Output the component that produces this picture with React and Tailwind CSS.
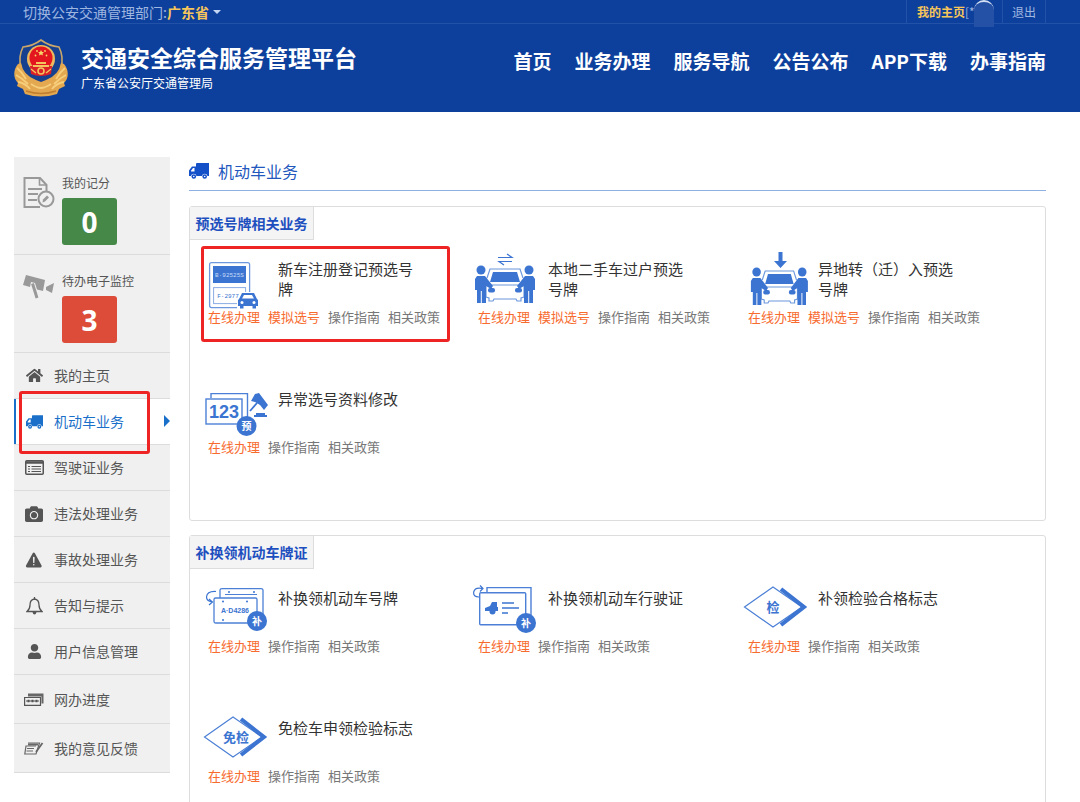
import React, { useState } from 'react';
import { FaHome, FaCamera, FaUser } from 'react-icons/fa';
import { IoWarning } from 'react-icons/io5';

const blue = '#3b74d1';
const cjk = '"Noto Sans CJK SC", sans-serif';

const navLinks = ['首页', '业务办理', '服务导航', '公告公布', 'APP下载', '办事指南'];

const Emblem = () => (
  <svg width="56" height="60" viewBox="0 0 56 60" aria-hidden="true">
    <path d="M28 2Q20 8 10 9Q5 19 8 30Q12 41 28 48Q44 41 48 30Q51 19 46 9Q36 8 28 2Z" fill="#17408f" stroke="#c9a66a" strokeWidth="1.600" />
    <path d="M5 26C0 32 0 40 5 45L4 48L10 51L12 56Q28 61 44 56L46 51L52 48L51 45C56 40 56 32 51 26L48 25Q46 37 33 42L28 44L23 42Q10 37 8 25Z" fill="#e3a850" />
    <path d="M4 30Q9 34 13 41M3 37Q9 40 15 46M5 44Q12 45 17 51M52 30Q47 34 43 41M53 37Q47 40 41 46M51 44Q44 45 39 51M18 46Q24 50 28 50Q32 50 38 46" fill="none" stroke="#f6ce7c" strokeWidth="1.800" />
    <path d="M13 53Q28 58 43 53" fill="none" stroke="#c07f30" strokeWidth="1.500" />
    <circle cx="28" cy="21" r="14" fill="#edb95e" />
    <circle cx="28" cy="20" r="11.500" fill="#e3151f" />
    <path d="M17 28H39L38 36Q28 40 18 36Z" fill="#dc2028" />
    <path d="M20 28H36M23 25H33" stroke="#f3c45d" strokeWidth="1.800" />
    <circle cx="28" cy="33" r="3" fill="none" stroke="#f3c45d" strokeWidth="1.600" />
    <path d="M18 31L23 35M38 31L33 35" stroke="#f3c45d" strokeWidth="1.400" />
    <path d="M28 12L29 14L31 14L29.500 15.500L30 17.500L28 16.500L26 17.500L26.500 15.500L25 14L27 14Z" fill="#f7d568" />
    <circle cx="22.500" cy="17.500" r="0.900" fill="#f7d568" />
    <circle cx="33.500" cy="17.500" r="0.900" fill="#f7d568" />
    <circle cx="24" cy="13" r="0.900" fill="#f7d568" />
    <circle cx="32" cy="13" r="0.900" fill="#f7d568" />
  </svg>
);

const ScoreIcon = () => (
  <svg width="32" height="34" viewBox="0 0 32 34" fill="none" stroke="#999" strokeWidth="2" aria-hidden="true">
    <path d="M23.500 16V9L17 2H1.500V31H17" />
    <path d="M16.500 2V9H24" strokeWidth="1.600" />
    <path d="M5 13H19M5 18H15M5 24H14" />
    <circle cx="23" cy="23" r="7.500" fill="#f0f0f0" />
    <path d="M19.500 26.500L20 23.500L24 19.500L26 21.500L22 25.500Z" fill="#999" stroke="none" />
  </svg>
);

const CctvIcon = () => (
  <svg width="32" height="26" viewBox="0 0 32 26" fill="#999" aria-hidden="true">
    <path d="M3 1L22 6L20 17L14 15.500L12 9L8 8L7 13L0 11Z" />
    <path d="M9.500 9.500L14 24" stroke="#999" strokeWidth="3" />
    <path d="M23 13L31 9L29 19L23 16Z" />
  </svg>
);

const ListIcon = () => (
  <svg width="19" height="15" viewBox="0 0 19 15" fill="none" stroke="#555" aria-hidden="true">
    <rect x="0.750" y="0.750" width="17.500" height="13.500" rx="1" strokeWidth="1.500" />
    <path d="M1 2.500H18" strokeWidth="2.500" />
    <path d="M3 6.500H5M6.500 6.500H16M3 9H5M6.500 9H16M3 11.500H5M6.500 11.500H16" strokeWidth="1.200" />
  </svg>
);

const BellIcon = () => (
  <svg width="17" height="18" viewBox="0 0 17 18" fill="none" stroke="#555" strokeWidth="1.300" aria-hidden="true">
    <path d="M8.500 2Q4 2.500 4 8Q4 12 1 14.500H16Q13 12 13 8Q13 2.500 8.500 2Z" />
    <path d="M8.500 0V2" />
    <path d="M6.500 15H10.500Q10 17.500 8.500 17.500T6.500 15Z" fill="#555" stroke="none" />
  </svg>
);

const ProgressIcon = () => (
  <svg width="20" height="13" viewBox="0 0 20 13" aria-hidden="true">
    <path d="M4 0.500H19.500V10.500H17.500V3.500H4Z" fill="#666" />
    <path d="M0.600 4.500H16.500V12.400H0.600Z" fill="#f0f0f0" stroke="#555" strokeWidth="1.200" />
    <path d="M2 8H15" stroke="#555" />
    <path d="M3.500 8H5.500M7.500 8H9.500M11.500 8H13.500" stroke="#555" strokeWidth="2.400" />
  </svg>
);

const FeedbackIcon = () => (
  <svg width="20" height="13" viewBox="0 0 20 13" fill="none" stroke="#666" strokeWidth="1.200" aria-hidden="true">
    <path d="M4 1H15.500L12 12H0.800L2 4H12" />
    <path d="M4 2.500H14" strokeWidth="2" />
    <path d="M3 6.500H10M2.500 9H9" />
    <path d="M18.500 1L12 10" strokeWidth="1.800" />
  </svg>
);

const TruckIcon = ({ className }) => (
  <svg width="20" height="16" viewBox="0 0 20 16" fill="currentColor" className={className} aria-hidden="true">
    <path d="M8 0H20V13H18.500A2.800 2.800 0 0 0 13 13H7.500A2.800 2.800 0 0 0 2 13H0V7.500L3 3.500H7V1Q7 0 8 0ZM4 5L2 7.800V8.500H5.500V5Z" fillRule="evenodd" />
    <circle cx="4.800" cy="13.500" r="2.300" />
    <circle cx="15.700" cy="13.500" r="2.300" />
    <circle cx="4.800" cy="13.500" r="0.800" fill="#fff" />
    <circle cx="15.700" cy="13.500" r="0.800" fill="#fff" />
  </svg>
);

const ServiceSvg = ({ children }) => (
  <svg width="66" height="60" viewBox="0 0 66 60" className="shrink-0" aria-hidden="true">
    {children}
  </svg>
);

const Badge = ({ x, y, text }) => (
  <>
    <circle cx={x} cy={y} r="10" fill={blue} />
    <text x={x} y={y + 4} fontSize="10" fontWeight="700" fill="#fff" textAnchor="middle" fontFamily={cjk}>{text}</text>
  </>
);

const NewPlateIcon = () => (
  <ServiceSvg>
    <rect x="6.600" y="11.600" width="40" height="45" rx="2" fill="#fff" stroke="#6d98de" strokeWidth="1.300" />
    <rect x="10" y="15" width="33" height="17" fill={blue} />
    <text x="26.500" y="26" fontSize="6" fill="#c9dbf7" textAnchor="middle" fontFamily="Liberation Mono">B·92525S</text>
    <rect x="10.600" y="36.600" width="32" height="16" fill="#fff" stroke="#8aace4" />
    <text x="25" y="47" fontSize="6" fill={blue} textAnchor="middle" fontFamily="Liberation Mono">F·2977</text>
    <path d="M34 58V49L38 41H52L56 49V58Z" fill="#fff" />
    <path d="M36 48L39 42H51L54 48L55 49V55H53V57.500H49.500V55H40.500V57.500H37V55H35V49Z" fill={blue} />
    <path d="M39 47.500L41 44H49L51 47.500Z" fill="#fff" />
    <circle cx="39" cy="51.500" r="1.500" fill="#fff" />
    <circle cx="51" cy="51.500" r="1.500" fill="#fff" />
  </ServiceSvg>
);

const Person = () => (
  <g fill={blue}>
    <circle cx="8" cy="19" r="4.500" />
    <path d="M4 25H12L20 35L18 38L13 35V52H8.800V40H7.800V52H4V39H2V28Z" />
    <rect x="15" y="37" width="7" height="4.500" rx="2" />
  </g>
);

// car held by two people, shared by the transfer and the relocation services
const CarPeople = () => (
  <>
    <path d="M14 27L17 18H47L50 27M18 34H46M13 27V46L16 47V50H20L21 48H43L44 50H48V47L51 46V27" fill="none" stroke="#6d98de" strokeWidth="1.200" />
    <path d="M20 21H44L47 31H17Z" fill={blue} />
    <Person />
    <g transform="translate(64 0) scale(-1 1)"><Person /></g>
  </>
);

const TransferIcon = () => (
  <ServiceSvg>
    <path d="M25 6.500H39L34 3M39 10.500H26L31 14" fill="none" stroke={blue} strokeWidth="1.200" />
    <CarPeople />
  </ServiceSvg>
);

const MoveInIcon = () => (
  <ServiceSvg>
    <path d="M35.500 1H39.500V10H44L37.500 17L31 10H35.500Z" fill={blue} />
    <g transform="translate(6 2) scale(0.95 1)"><CarPeople /></g>
  </ServiceSvg>
);

const FixNumberIcon = () => (
  <ServiceSvg>
    <path d="M8 17V12.600H44.500V42" fill="none" stroke="#4c80d6" strokeWidth="1.400" />
    <rect x="3" y="18" width="36" height="25" fill="#fff" stroke="#4c80d6" strokeWidth="1.400" />
    <text x="21" y="37" fontSize="18" fontWeight="700" fill={blue} textAnchor="middle" fontFamily="Liberation Sans">123</text>
    <path d="M52 13L56 12L65 24L61 29L57 24L52 21L48 20Z" fill={blue} />
    <path d="M54 22L47 30" stroke={blue} strokeWidth="1.800" />
    <path d="M51 35H64M53 33H62" stroke={blue} strokeWidth="2.200" />
    <Badge x={43.5} y={45} text="预" />
  </ServiceSvg>
);

const ReissuePlateIcon = () => (
  <ServiceSvg>
    <path d="M17 18V10Q17 8.600 19 8.600H58Q60 8.600 60 10V34" fill="none" stroke="#4c80d6" strokeWidth="1.300" />
    <path d="M22 14.500H54" stroke="#4c80d6" />
    <rect x="11" y="18" width="43" height="25" rx="1.500" fill="#fff" stroke="#4c80d6" strokeWidth="1.300" />
    <path d="M13 11.500Q4 11 3.500 17Q3.500 21 9 22M6 19L9.500 22L6 25" fill="none" stroke={blue} strokeWidth="1.200" />
    <g fill={blue}>
      <circle cx="26" cy="12" r="1" /><circle cx="51" cy="12" r="1" />
      <circle cx="20" cy="21.500" r="1" /><circle cx="44" cy="21.500" r="1" /><circle cx="20" cy="40" r="1" />
    </g>
    <text x="32" y="33" fontSize="7" fontWeight="700" fill={blue} textAnchor="middle" fontFamily="Liberation Sans">A·D4286</text>
    <Badge x={54} y={41} text="补" />
  </ServiceSvg>
);

const ReissueLicenseIcon = () => (
  <ServiceSvg>
    <path d="M14 13V7.600H58V35" fill="none" stroke="#4c80d6" strokeWidth="1.400" />
    <rect x="6.700" y="12.700" width="46" height="32" rx="1" fill="#fff" stroke="#4c80d6" strokeWidth="1.400" />
    <path d="M6 17Q0 17 0.700 12Q2 7 9 8.500M7 5.500L10 8.500L7 11.500" fill="none" stroke={blue} strokeWidth="1.200" />
    <path d="M12 28L17 26L19 22H24V27H25V31H12Z" fill={blue} />
    <circle cx="19.500" cy="31.500" r="3" fill={blue} />
    <path d="M29 23H41M29 28H46M29 33H35" stroke={blue} strokeWidth="1.700" />
    <Badge x={53} y={43} text="补" />
  </ServiceSvg>
);

const DiamondIcon = ({ text }) => (
  <ServiceSvg>
    <path d="M1.500 27L30 7L59 27L30 47Z" fill="#fff" stroke="#4c80d6" strokeWidth="1.200" />
    <path d="M38 9L61 27L38 45" fill="none" stroke={blue} strokeWidth="4" />
    <text x={text.length > 1 ? 33 : 30} y="32" fontSize="13" fontWeight="700" fill={blue} textAnchor="middle" fontFamily={cjk}>{text}</text>
  </ServiceSvg>
);

const menuItems = [
  { label: '我的主页', icon: <FaHome className="text-[17px]" /> },
  { label: '机动车业务', icon: <TruckIcon className="h-[14px] w-[17px]" />, framed: true },
  { label: '驾驶证业务', icon: <ListIcon /> },
  { label: '违法处理业务', icon: <FaCamera className="text-[18px]" /> },
  { label: '事故处理业务', icon: <IoWarning className="text-[20px]" /> },
  { label: '告知与提示', icon: <BellIcon /> },
  { label: '用户信息管理', icon: <FaUser className="text-[15px]" /> },
  { label: '网办进度', icon: <ProgressIcon />, tall: true },
  { label: '我的意见反馈', icon: <FeedbackIcon />, tall: true },
];

const sections = [
  {
    title: '预选号牌相关业务',
    services: [
      { name: '新车注册登记预选号牌', icon: <NewPlateIcon />, simulate: true, framed: true },
      { name: '本地二手车过户预选号牌', icon: <TransferIcon />, simulate: true },
      { name: '异地转（迁）入预选号牌', icon: <MoveInIcon />, simulate: true },
      { name: '异常选号资料修改', icon: <FixNumberIcon /> },
    ],
  },
  {
    title: '补换领机动车牌证',
    services: [
      { name: '补换领机动车号牌', icon: <ReissuePlateIcon /> },
      { name: '补换领机动车行驶证', icon: <ReissueLicenseIcon /> },
      { name: '补领检验合格标志', icon: <DiamondIcon text="检" /> },
      { name: '免检车申领检验标志', icon: <DiamondIcon text="免检" /> },
    ],
  },
];

const Header = () => (
  <header className="bg-[#0d409c] text-white">
    <div className="flex h-6 items-center justify-between border-b border-[#2252a8] pl-[23px] pr-[34px] text-[#9fb6e0]">
      <div className="flex items-center text-[14px] leading-5">
        <label htmlFor="province">切换公安交通管理部门:</label>
        <select id="province" className="w-[44px] appearance-none bg-transparent font-bold text-[#f7c65a] focus:outline-none">
          <option>广东省</option>
        </select>
        <span className="ml-[2px] border-x-4 border-t-4 border-x-transparent border-t-[#c3d6f4]" />
      </div>
      <div className="flex h-full text-[12px]">
        <a href="#home" className="relative flex w-24 items-center border-l border-[#2252a8] pl-[10px]">
          <span className="font-bold text-[#f7c65a]">我的主页</span>[*
          <span className="absolute right-2 top-0 h-[27px] w-5 rounded-t-full border-t-2 border-[#d5e0f2] bg-[#2450a5]" />
        </a>
        <a href="#logout" className="flex w-11 items-center justify-center border-x border-[#2252a8]">退出</a>
      </div>
    </div>
    <div className="flex h-[88px] items-start justify-between pl-[13px] pr-[34px]">
      <div className="flex gap-3 pt-[14px]">
        <Emblem />
        <div>
          <h1 className="mt-[3px] text-[23px] font-bold leading-8">交通安全综合服务管理平台</h1>
          <p className="text-[12px] leading-5">广东省公安厅交通管理局</p>
        </div>
      </div>
      <nav className="flex gap-[23px] pt-[23px] text-[19px] font-bold leading-7">
        {navLinks.map((link) => (
          <a key={link} href="#nav">{link}</a>
        ))}
      </nav>
    </div>
  </header>
);

const ScoreBox = ({ icon, label, value, color }) => (
  <div className="flex h-[98px] gap-[7px] border-b border-[#dcdcdc] pl-[9px] pt-4">
    <div className="w-8 pt-[3px]">{icon}</div>
    <div>
      <p className="text-[12px] leading-5 text-[#555]">{label}</p>
      <div className={`mt-[5px] flex h-[47px] w-[55px] items-center justify-center rounded-[3px] font-['Open_Sans',sans-serif] text-[28px] font-bold text-white ${color}`}>
        {value}
      </div>
    </div>
  </div>
);

const Sidebar = () => {
  const [active, setActive] = useState('机动车业务');

  return (
    <aside className="w-[156px] shrink-0 self-start bg-[#f0f0f0]">
      <ScoreBox icon={<ScoreIcon />} label="我的记分" value="0" color="bg-[#468847]" />
      <ScoreBox icon={<CctvIcon />} label="待办电子监控" value="3" color="bg-[#dd4b39]" />
      <ul>
        {menuItems.map((item) => (
          <li key={item.label} className={`relative border-b border-[#dcdcdc] ${item.tall ? 'h-[49px]' : 'h-[46px]'} ${active === item.label ? 'bg-white' : ''}`}>
            <button
              type="button"
              onClick={() => setActive(item.label)}
              className={`flex h-full w-full items-center gap-2 border-l-2 pl-[6px] text-[14px] ${active === item.label ? 'border-[#1a6fc9] text-[#1a6fc9]' : 'border-transparent text-[#555]'}`}
            >
              <span className="flex w-6 justify-center">{item.icon}</span>
              {item.label}
            </button>
            {active === item.label && (
              <span className="absolute right-0 top-4 border-y-[6px] border-l-[6px] border-y-transparent border-l-[#1a6fc9]" />
            )}
            {item.framed && (
              <span className="pointer-events-none absolute -bottom-[10px] -top-2 left-[5px] right-5 z-10 rounded-[3px] border-[3px] border-[#ee2424]" />
            )}
          </li>
        ))}
      </ul>
    </aside>
  );
};

const Service = ({ service }) => (
  <li className="relative h-[130px] pt-[11px]">
    <div className="flex h-14 gap-[9px] pl-[13px]">
      {service.icon}
      <h3 className="w-[140px] pt-2 text-[15px] leading-5 text-[#333]">{service.name}</h3>
    </div>
    <div className="relative flex gap-2 pl-[18px] text-[13px] leading-5 text-[#777]">
      <a href="#apply" className="text-[#f76b2f]">在线办理</a>
      {service.simulate && <a href="#simulate" className="text-[#f76b2f]">模拟选号</a>}
      <a href="#guide">操作指南</a>
      <a href="#policy">相关政策</a>
    </div>
    {service.framed && (
      <span className="pointer-events-none absolute left-[11px] top-[6px] h-24 w-[249px] rounded-[3px] border-[3px] border-[#ee2424]" />
    )}
  </li>
);

const App = () => (
  <div className="min-h-screen bg-white font-['Noto_Sans_CJK_SC',sans-serif]">
    <Header />
    <div className="flex gap-[19px] pl-[14px] pr-[34px] pt-[45px]">
      <Sidebar />
      <main className="min-w-0 flex-1">
        <h2 className="flex h-[34px] items-center gap-[9px] border-b border-[#8fb0e3] pb-[6px] text-[16px] text-[#2257bd]">
          <TruckIcon className="text-[#1450c8]" />
          机动车业务
        </h2>
        <div className="space-y-[14px] pt-[15px]">
          {sections.map((section) => (
            <section key={section.title} className="rounded-[3px] border border-[#ddd] pb-5">
              <h3 className="flex h-[33px] w-[124px] items-center justify-center border-b border-r border-[#ddd] bg-[#f4f4f4] text-[14px] font-bold text-[#1d4fbf]">
                {section.title}
              </h3>
              <ul className="grid grid-cols-[repeat(auto-fill,270px)]">
                {section.services.map((service) => (
                  <Service key={service.name} service={service} />
                ))}
              </ul>
            </section>
          ))}
        </div>
      </main>
    </div>
  </div>
);

export default App;
